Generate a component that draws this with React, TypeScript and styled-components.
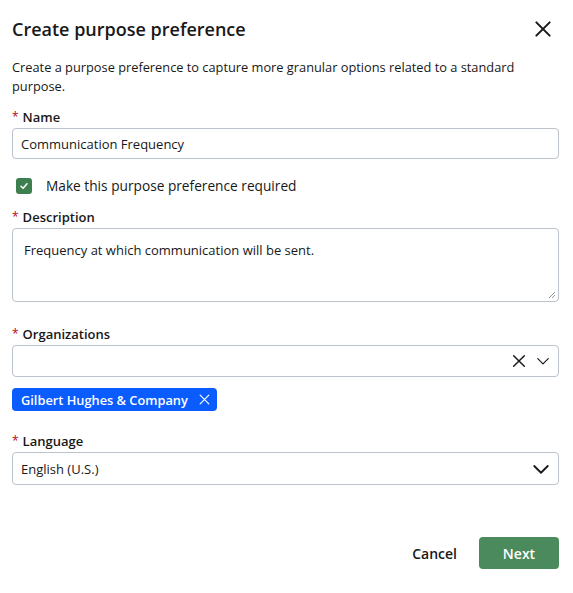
import React from "react";
import styled, { createGlobalStyle } from "styled-components";

const Global = createGlobalStyle`
  html, body { margin: 0; padding: 0; background: #ffffff; }
  body { font-family: "Open Sans", "Noto Sans", sans-serif; color: #181818; }
  * { box-sizing: border-box; }
`;

const Modal = styled.div`
  width: 573px;
  height: 593px;
  padding: 0 14px 0 12px;
  display: flex;
  flex-direction: column;
`;

const Header = styled.div`
  display: flex;
  align-items: center;
  justify-content: space-between;
  height: 57px;
`;

const Title = styled.h2`
  margin: 0;
  font-size: 18px;
  font-weight: 600;
  color: #181818;
`;

const CloseButton = styled.button`
  border: 0;
  background: none;
  padding: 0;
  width: 24px;
  height: 24px;
  display: flex;
  align-items: center;
  justify-content: center;
  margin-right: 4px;
  cursor: pointer;
`;

const Intro = styled.p`
  margin: 0;
  font-size: 12.8px;
  line-height: 19px;
  color: #181818;
  padding-top: 1px;
`;

const Field = styled.div<{ $top?: number }>`
  display: flex;
  flex-direction: column;
  margin-top: ${(p) => p.$top ?? 0}px;
`;

const Label = styled.label`
  font-size: 13px;
  font-weight: 600;
  line-height: 18px;
  color: #181818;
  margin-bottom: 2px;
  display: flex;
  align-items: center;
`;

const Req = styled.abbr`
  color: #ba0517;
  text-decoration: none;
  margin-right: 4px;
  font-weight: 400;
  font-size: 12px;
`;

const Input = styled.div<{ $h?: number }>`
  height: ${(p) => p.$h ?? 32}px;
  border: 1px solid #bcc3cb;
  border-radius: 4px;
  display: flex;
  align-items: center;
  padding: 0 8px;
  font-size: 13px;
  color: #181818;
  background: #fff;
`;

const TextArea = styled.div`
  height: 74px;
  border: 1px solid #bcc3cb;
  border-radius: 4px;
  padding: 12px 11px;
  font-size: 13px;
  line-height: 18px;
  color: #181818;
  position: relative;
`;

const Resize = styled.svg`
  position: absolute;
  right: 2px;
  bottom: 2px;
`;

const CheckRow = styled.div`
  display: flex;
  align-items: center;
  gap: 14px;
  margin-top: 17px;
  padding-left: 4px;
  font-size: 13.7px;
  color: #181818;
`;

const Check = styled.span`
  width: 16px;
  height: 16px;
  border-radius: 3px;
  background: #3e7f4f;
  display: flex;
  align-items: center;
  justify-content: center;
`;

const Icons = styled.div`
  margin-left: auto;
  display: flex;
  align-items: center;
  gap: 9px;
`;

const Tag = styled.span`
  align-self: flex-start;
  margin-top: 11px;
  height: 23px;
  padding: 0 6px 0 9px;
  background: #0b5cff;
  border-radius: 4px;
  color: #fff;
  font-size: 12.8px;
  font-weight: 600;
  display: flex;
  align-items: center;
  gap: 10px;
`;

const Footer = styled.div`
  margin-top: auto;
  margin-bottom: 24px;
  display: flex;
  justify-content: flex-end;
  align-items: center;
  gap: 22px;
`;

const TextButton = styled.button`
  border: 0;
  background: none;
  font-family: inherit;
  font-size: 14px;
  font-weight: 600;
  color: #181818;
  padding: 0;
`;

const PrimaryButton = styled.button`
  border: 0;
  border-radius: 4px;
  background: #4a8a5c;
  color: #fff;
  font-family: inherit;
  font-size: 14px;
  font-weight: 600;
  width: 80px;
  height: 32px;
`;

const XIcon = ({ size, color, w }: { size: number; color: string; w: number }) => (
  <svg width={size} height={size} viewBox="0 0 24 24" fill="none">
    <path d="M4 4L20 20M20 4L4 20" stroke={color} strokeWidth={w} strokeLinecap="round" />
  </svg>
);

const Chevron = ({ size, w }: { size: number; w: number }) => (
  <svg width={size} height={size} viewBox="0 0 24 24" fill="none">
    <path d="M3 8L12 17L21 8" stroke="#181818" strokeWidth={w} strokeLinecap="round" strokeLinejoin="round" />
  </svg>
);

export default function App() {
  return (
    <>
      <Global />
      <Modal>
        <Header>
          <Title>Create purpose preference</Title>
          <CloseButton aria-label="Close">
            <XIcon size={20} color="#181818" w={2.4} />
          </CloseButton>
        </Header>
        <Intro>Create a purpose preference to capture more granular options related to a standard purpose.</Intro>

        <Field $top={12}>
          <Label><Req title="required">*</Req>Name</Label>
          <Input $h={31}>Communication Frequency</Input>
        </Field>

        <CheckRow>
          <Check>
            <svg width="10" height="10" viewBox="0 0 10 10" fill="none">
              <path d="M2 5.2L4.1 7.2L8 2.8" stroke="#fff" strokeWidth="1.5" strokeLinecap="round" strokeLinejoin="round" />
            </svg>
          </Check>
          Make this purpose preference required
        </CheckRow>

        <Field $top={13}>
          <Label><Req title="required">*</Req>Description</Label>
          <TextArea>
            Frequency at which communication will be sent.
            <Resize width="8" height="8" viewBox="0 0 8 8">
              <path d="M1 7L7 1M4 7L7 4" stroke="#9a9a9a" strokeWidth="1" />
            </Resize>
          </TextArea>
        </Field>

        <Field $top={23}>
          <Label><Req title="required">*</Req>Organizations</Label>
          <Input>
            <Icons>
              <XIcon size={16} color="#181818" w={2.2} />
              <Chevron size={14} w={2} />
            </Icons>
          </Input>
          <Tag>
            Gilbert Hughes &amp; Company
            <XIcon size={13} color="#fff" w={2.2} />
          </Tag>
        </Field>

        <Field $top={21}>
          <Label><Req title="required">*</Req>Language</Label>
          <Input $h={33}>
            English (U.S.)
            <Icons>
              <Chevron size={18} w={2.4} />
            </Icons>
          </Input>
        </Field>

        <Footer>
          <TextButton>Cancel</TextButton>
          <PrimaryButton>Next</PrimaryButton>
        </Footer>
      </Modal>
    </>
  );
}
